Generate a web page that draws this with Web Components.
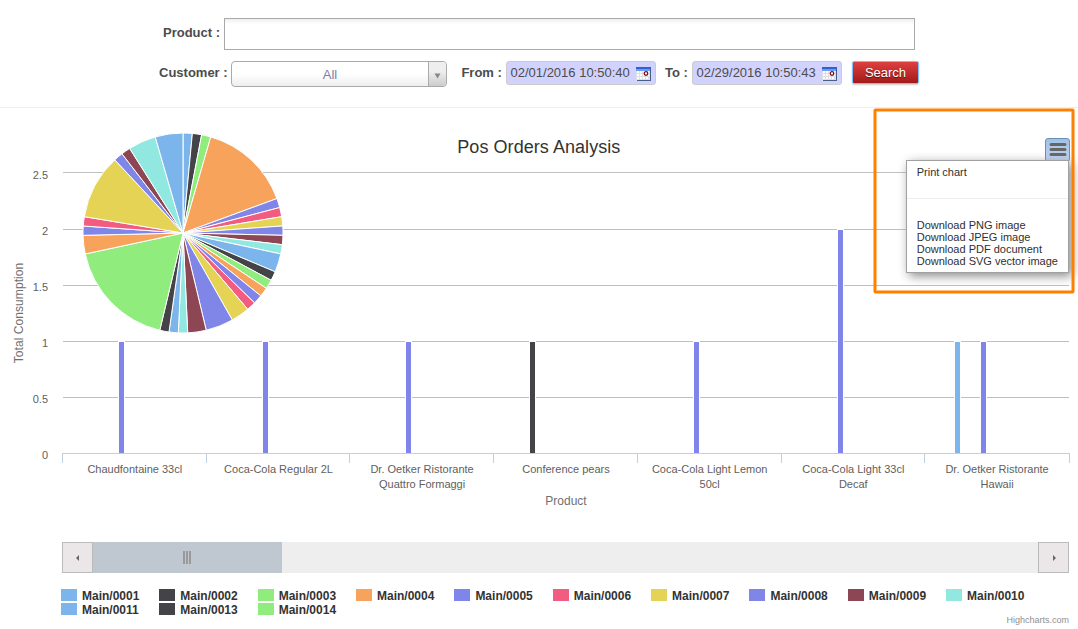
<!DOCTYPE html>
<html lang="en">
<head>
<meta charset="utf-8">
<title>Pos Orders Analysis</title>
<style>
html,body{margin:0;background:#fff;overflow:hidden}
body{font-family:"Liberation Sans",Arial,sans-serif;font-size:13px;color:#4c4c4c}
</style>
</head>
<body>
<orders-page></orders-page>
<script>
const COLORS=['#7cb5ec','#434348','#90ed7d','#f7a35c','#8085e9','#f15c80','#e4d354','#8085e8','#8d4653','#91e8e1'];
function define(name,html,init){
  customElements.define(name,class extends HTMLElement{
    connectedCallback(){
      if(this.shadowRoot)return;
      const root=this.attachShadow({mode:'open'});
      const t=document.createElement('template');
      t.innerHTML=html;
      root.append(t.content.cloneNode(true));
      if(init)init(this,root);
    }
  });
}

define('field-label',`<style>:host{display:block;font-weight:bold;font-size:13px;line-height:15px;white-space:nowrap;color:#4c4c4c}</style><slot></slot>`);

define('text-field',`<style>:host{display:block;box-sizing:border-box;width:691px;height:32px;border:1px solid #a9a9a9;background:linear-gradient(#eee,#fff 5px)}</style>`);

define('select-box',`<style>
:host{display:flex;box-sizing:border-box;width:216px;height:26px;border:1px solid #aaa;border-radius:4px;overflow:hidden;background:linear-gradient(#fff 50%,#eee);color:#7c7bad;line-height:26px}
.v{flex:1;text-align:center}
.a{width:17px;border-left:1px solid #aaa;background:linear-gradient(#eee 40%,#ccc);display:flex;align-items:center;justify-content:center}
svg{display:block;margin-top:4px}
</style><div class="v"><slot></slot></div><div class="a"><svg width="7" height="6"><path d="M.5 .5h6L3.5 5.5z" fill="#888"/></svg></div>`);

define('date-field',`<style>
:host{display:flex;box-sizing:border-box;width:150px;height:24px;border:1px solid #ccc;border-radius:3px;background:#d2d2ff;padding:0 4px 0 3.5px;justify-content:space-between;line-height:22px;white-space:nowrap;font-size:13px;color:#4c4c4c}
svg{display:block;margin-top:4px}
</style><span><slot></slot></span><svg width="15" height="15">
<rect x="0" y="1" width="15" height="14" fill="#dcdfe4"/><rect x="0" y="1" width="15" height="2" fill="#2f62cf"/><rect x="0" y="3" width="15" height="2" fill="#6c9dee"/>
<path d="M1 5h2v2H1zM4 5h2v2H4zM1 8h2v2H1zM4 8h2v2H4zM1 11h2v2H1zM4 11h2v2H4zM7 11h2v2H7zM10 11h2v2h-2zM7 5h6v5H7z" fill="#fff"/>
<path d="M14.500 3v12M1 14.500h14" stroke="#46608c" fill="none"/>
<circle cx="10" cy="7.500" r="1.800" fill="#fff" stroke="#860818" stroke-width="1.300"/></svg>`);

define('search-button',`<style>
:host{display:block;box-sizing:border-box;width:67px;height:23px;border:1px solid #80bfff;border-radius:2px;background:linear-gradient(#df3f3f,#a21a1a);color:#fff;text-align:center;line-height:22px;font-size:13px;text-shadow:0 1px 1px rgba(0,0,0,.5);box-shadow:0 1px 2px rgba(0,0,0,.2)}
</style><slot></slot>`);

define('search-form',`<style>
:host{display:block;box-sizing:border-box;height:108px;border-bottom:1px solid #eee;padding-top:18px}
.row{display:flex;align-items:flex-start}
.one{padding-left:163px;height:43px}.two{padding-left:159px}
.one field-label{width:61px;margin-top:7px}.two field-label{margin-top:4px}
.c{width:72px}.f{width:44.6px;margin-left:14.4px}.t{width:27px;margin-left:9px}search-button{margin-left:10px}
</style>
<div class="row one"><field-label>Product :</field-label><text-field></text-field></div>
<div class="row two"><field-label class="c">Customer :</field-label><select-box>All</select-box>
<field-label class="f">From :</field-label><date-field>02/01/2016 10:50:40</date-field>
<field-label class="t">To :</field-label><date-field>02/29/2016 10:50:43</date-field>
<search-button>Search</search-button></div>`);

define('orders-chart',`<style>:host{display:block;height:422px}svg{display:block}text{white-space:pre}</style>
<svg width="1078" height="422" viewBox="0 108 1078 422"></svg>`,(el,root)=>{
  let s='';
  [172,229,285,341,397,453].forEach((y,i)=>{
    s+=`<path d="M${i===5?62:63} ${y+.5}H1069" stroke="${i===5?'#c0d0e0':'#c0c0c0'}"/>`;
    s+=`<text x="48" y="${y+(i===0?7:6)}" text-anchor="end" font-size="11" fill="#606060">${['2.5','2','1.5','1','0.5','0'][i]}</text>`;
  });
  [62,206,349,493,637,781,924,1069].forEach(x=>s+=`<path d="M${x+.5} 453V463" stroke="#c0d0e0"/>`);
  [[119,342,4],[263,342,4],[406,342,4],[530,342,1],[694,342,4],[838,230,4],[955,342,0],[981,342,4]].forEach(([x,y,c])=>{
    s+=`<rect x="${x-.5}" y="${y-.5}" width="6" height="${454-y}" fill="${COLORS[c]}" stroke="#fff"/>`;
  });
  s+='<path d="M62 453.5H1069" stroke="#c0d0e0"/>';
  [[134.8,'Chaudfontaine 33cl'],[278.5,'Coca-Cola Regular 2L'],[422.1,'Dr. Oetker Ristorante','Quattro Formaggi'],[566,'Conference pears'],[709.7,'Coca-Cola Light Lemon','50cl'],[853.3,'Coca-Cola Light 33cl','Decaf'],[997.1,'Dr. Oetker Ristorante','Hawaii']].forEach(([x,...l])=>l.forEach((t,i)=>{
    s+=`<text x="${x}" y="${473+i*15}" text-anchor="middle" font-size="11" fill="#606060">${t}</text>`;
  }));
  const units=[1,1,1,10,1,1,1,1,1,1,2,1,1,1,1,1,2,3,2,1,1,1,12,2,1,1,7,1,1,3,3];
  const cols=[0,1,2,3,4,5,6,7,8,9,0,1,2,3,4,5,6,7,8,9,0,1,2,3,4,5,6,7,8,9,0];
  const sum=units.reduce((a,b)=>a+b);
  const pt=u=>{const a=u/sum*2*Math.PI;return (183+100*Math.sin(a)).toFixed(2)+' '+(233-100*Math.cos(a)).toFixed(2)};
  let at=0;
  units.forEach((u,i)=>{
    s+=`<path d="M183 233L${pt(at)}A100 100 0 0 1 ${pt(at+u)}Z" fill="${COLORS[cols[i]]}" stroke="#fff" stroke-linejoin="round"/>`;
    at+=u;
  });
  s+=`<text x="538.8" y="153" text-anchor="middle" font-size="18" textLength="163" fill="#333">Pos Orders Analysis</text>
  <text x="566" y="505" text-anchor="middle" font-size="12" fill="#707070">Product</text>
  <text transform="translate(23 313) rotate(-90)" text-anchor="middle" font-size="12" textLength="100.500" fill="#707070">Total Consumption</text>`;
  root.querySelector('svg').innerHTML=s;
});

define('export-menu',`<style>
:host{display:block;position:absolute;left:906px;top:138px;width:164px}
.b{box-sizing:border-box;width:25px;height:24px;margin-left:139px;border:1px solid #6a8fb5;border-radius:3px;background:linear-gradient(#9fc1e6,#c4d4f4)}
.b svg{display:block}
.m{position:relative;margin-top:-2px;box-sizing:border-box;width:163px;height:113px;border:1px solid #a0a0a0;background:#fff;box-shadow:3px 3px 10px #888;padding:5px 9.7px;font-size:11px;line-height:12px;color:#303030;white-space:nowrap}
hr{border:0;border-top:1px solid #eee;margin:20px -9.7px}
</style>
<div class="b"><svg width="23" height="22"><path d="M5 5.500h14M5 10.500h14M5 15.500h14" stroke="#666" stroke-width="3" stroke-linecap="round"/></svg></div>
<div class="m"><div>Print chart</div><hr><div>Download PNG image</div><div>Download JPEG image</div><div>Download PDF document</div><div>Download SVG vector image</div></div>`);

define('highlight-frame',`<style>:host{display:block;position:absolute;left:873px;top:107px}svg{display:block}</style>
<svg width="204" height="189"><rect x="2" y="3" width="198" height="182" rx=".5" fill="none" stroke="#ff8000" stroke-width="3"/></svg>`);

define('chart-scrollbar',`<style>
:host{display:flex;margin:12px 9px 0 62px;height:31px;background:#eee}
.b{box-sizing:border-box;width:31px;border:1px solid #bbb;background:#ebe7e8}
.h{width:189px;background:#bfc8d1;display:flex;align-items:center;justify-content:center}
.b,.h{flex:none}.s{flex:1}svg{display:block}
</style>
<div class="b"><svg width="29" height="29"><path d="M16 12v6l-3-3z" fill="#666"/></svg></div>
<div class="h"><svg width="8" height="13" style="margin:-1px 1px 0 0"><path d="M1 0v13M4 0v13M7 0v13" stroke="#999" stroke-width="2"/></svg></div><div class="s"></div>
<div class="b"><svg width="29" height="29"><path d="M14 12v6l3-3z" fill="#666"/></svg></div>`);

define('legend-item',`<style>
:host{display:flex;align-items:flex-start;gap:5px;height:14px;font-size:12px;line-height:14px;font-weight:bold;color:#333}
i{width:16px;height:12px;flex:none;margin-top:1px}
span{margin-top:1px}
</style><i></i><span><slot></slot></span>`,(el,root)=>{root.querySelector('i').style.background=COLORS[el.getAttribute('color')]});

define('chart-legend',`<style>:host{display:grid;grid-template-columns:repeat(10,98.35px);margin:15px 0 0 61px}</style>`,(el,root)=>{
  ['0001','0002','0003','0004','0005','0006','0007','0008','0009','0010','0011','0013','0014'].forEach((n,i)=>{
    const e=document.createElement('legend-item');
    e.setAttribute('color',i%10);
    e.textContent='Main/'+n;
    root.append(e);
  });
});

define('chart-credits',`<style>:host{display:block;text-align:right;margin:-1px 9px 0 0;font-size:9px;line-height:11px;color:#909090}</style><slot></slot>`);

define('orders-page',`<style>:host{display:block;position:relative;width:1078px;height:629px;overflow:hidden}</style>
<search-form></search-form><orders-chart></orders-chart><chart-scrollbar></chart-scrollbar><chart-legend></chart-legend>
<chart-credits>Highcharts.com</chart-credits><export-menu></export-menu><highlight-frame></highlight-frame>`);
</script>
</body>
</html>
